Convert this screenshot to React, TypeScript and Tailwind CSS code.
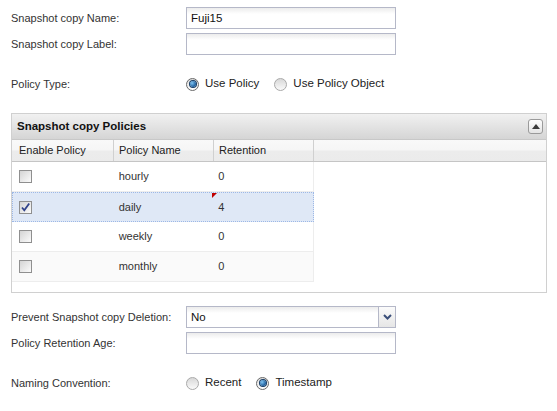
import React from "react";

const inputCls =
  "h-[22px] w-[210px] border border-[#b5b8c8] bg-[linear-gradient(#ececec,#ffffff_6px)] px-[4px] text-[11.5px] leading-[20px] text-[#111] outline-none";

function Radio({ checked }: { checked?: boolean }) {
  return (
    <span
      className={`relative flex h-[13px] w-[13px] shrink-0 items-center justify-center rounded-full border ${
        checked
          ? "border-[#6a6a6a] bg-[linear-gradient(#dcdcdc,#ffffff)]"
          : "border-[#a9a9a9] bg-[linear-gradient(#d8d8d8,#fafafa)]"
      }`}
    >
      {checked && (
        <span className="h-[6px] w-[6px] rounded-full bg-[radial-gradient(circle_at_35%_35%,#7fc4f2,#1b5c9b_70%)] ring-1 ring-[#163d66]" />
      )}
    </span>
  );
}

function Checkbox({ checked }: { checked?: boolean }) {
  return (
    <span className="relative flex h-[13px] w-[13px] items-center justify-center border border-[#8f8f8f] bg-[linear-gradient(135deg,#d4d4d4,#fbfbfb)]">
      {checked && (
        <svg width="11" height="11" viewBox="0 0 11 11" className="absolute">
          <path
            d="M2 5.5 L4.3 8.3 L9.2 1.5"
            fill="none"
            stroke="#31438a"
            strokeWidth="1.8"
          />
        </svg>
      )}
    </span>
  );
}

const rows = [
  { name: "hourly", ret: "0" },
  { name: "daily", ret: "4", selected: true },
  { name: "weekly", ret: "0" },
  { name: "monthly", ret: "0", alt: true },
];

export default function App() {
  return (
    <div
      className="w-[557px] h-[411px] bg-white pl-[11px] pt-[7px] text-[11px] text-[#333]"
      style={{ fontFamily: '"Liberation Sans", Arial, sans-serif' }}
    >
      {/* name / label */}
      <div className="flex h-[22px] items-center">
        <div className="w-[175px]">Snapshot copy Name:</div>
        <div className={inputCls}>Fuji15</div>
      </div>
      <div className="mt-[4px] flex h-[22px] items-center">
        <div className="w-[175px]">Snapshot copy Label:</div>
        <div className={inputCls} />
      </div>

      {/* policy type */}
      <div className="mt-[20px] flex h-[18px] items-center">
        <div className="w-[175px]">Policy Type:</div>
        <Radio checked />
        <span className="ml-[6px] text-[11.5px] text-[#222]">Use Policy</span>
        <span className="ml-[15px]">
          <Radio />
        </span>
        <span className="ml-[6px] text-[11.5px] text-[#222]">Use Policy Object</span>
      </div>

      {/* policies panel */}
      <div className="mt-[20px] h-[180px] w-[536px] border border-[#d0d0d0] bg-white">
        <div className="flex h-[26px] items-center justify-between border-b border-[#c8c8c8] bg-[linear-gradient(#f1f1f1,#d5d5d5)] pl-[5px] pr-[3px]">
          <span className="text-[11.5px] font-bold text-[#111]">Snapshot copy Policies</span>
          <span className="flex h-[15px] w-[15px] items-center justify-center rounded-[3px] border border-[#9a9a9a] bg-[linear-gradient(#fdfdfd,#e4e4e4)]">
            <svg width="8" height="5" viewBox="0 0 8 5">
              <path d="M0 5 L4 0 L8 5 Z" fill="#3b3b3b" />
            </svg>
          </span>
        </div>
        <div className="flex h-[22px] border-b border-[#c5c5c5] bg-[linear-gradient(#f9f9f9_0%,#f6f6f6_45%,#ececec_55%,#ebebeb_100%)]">
          <div className="flex w-[102px] items-center border-r border-[#d0d0d0] pl-[7px] text-[#222]">
            Enable Policy
          </div>
          <div className="flex w-[100px] items-center border-r border-[#d0d0d0] pl-[5px] text-[#222]">
            Policy Name
          </div>
          <div className="flex w-[100px] items-center border-r border-[#d0d0d0] pl-[5px] text-[#222]">
            Retention
          </div>
        </div>
        <div className="flex flex-col">
          {rows.map((r) => (
            <div
              key={r.name}
              className={`flex h-[30px] w-[302px] items-center ${
                r.selected
                  ? "border border-dotted border-[#9db8e6] bg-[#dfe8f6]"
                  : `border-b border-r border-[#ededed] ${r.alt ? "bg-[#fafafa]" : "bg-white"}`
              }`}
            >
              <div className={`${r.selected ? "w-[101px] pl-[6px]" : "w-[102px] pl-[7px]"} flex items-center`}>
                <Checkbox checked={r.selected} />
              </div>
              <div className="w-[100px] pl-[5px]">{r.name}</div>
              <div className="relative flex h-full w-[100px] items-center pl-[5px]">
                {r.selected && (
                  <span className="absolute -left-px top-0 h-0 w-0 border-r-[5px] border-t-[5px] border-r-transparent border-t-[#c00000]" />
                )}
                {r.ret}
              </div>
            </div>
          ))}
        </div>
      </div>

      {/* deletion / retention */}
      <div className="mt-[13px] flex h-[22px] items-center">
        <div className="w-[175px]">Prevent Snapshot copy Deletion:</div>
        <div className="flex h-[22px] w-[210px] border border-[#b5b8c8] bg-[linear-gradient(#ececec,#ffffff_6px)]">
          <div className="flex-1 px-[4px] text-[11.5px] leading-[20px] text-[#111]">No</div>
          <div className="flex w-[17px] items-center justify-center border-l border-[#b5b8c8] bg-[linear-gradient(#fbfbfb,#e6e6e6)]">
            <svg width="9" height="6" viewBox="0 0 9 6">
              <path d="M1 1 L4.5 4.5 L8 1" fill="none" stroke="#3b4f7a" strokeWidth="2" />
            </svg>
          </div>
        </div>
      </div>
      <div className="mt-[4px] flex h-[22px] items-center">
        <div className="w-[175px]">Policy Retention Age:</div>
        <div className={inputCls} />
      </div>

      {/* naming convention */}
      <div className="mt-[20px] flex h-[18px] items-center">
        <div className="w-[175px]">Naming Convention:</div>
        <Radio />
        <span className="ml-[6px] text-[11.5px] text-[#222]">Recent</span>
        <span className="ml-[15px]">
          <Radio checked />
        </span>
        <span className="ml-[6px] text-[11.5px] text-[#222]">Timestamp</span>
      </div>
    </div>
  );
}
